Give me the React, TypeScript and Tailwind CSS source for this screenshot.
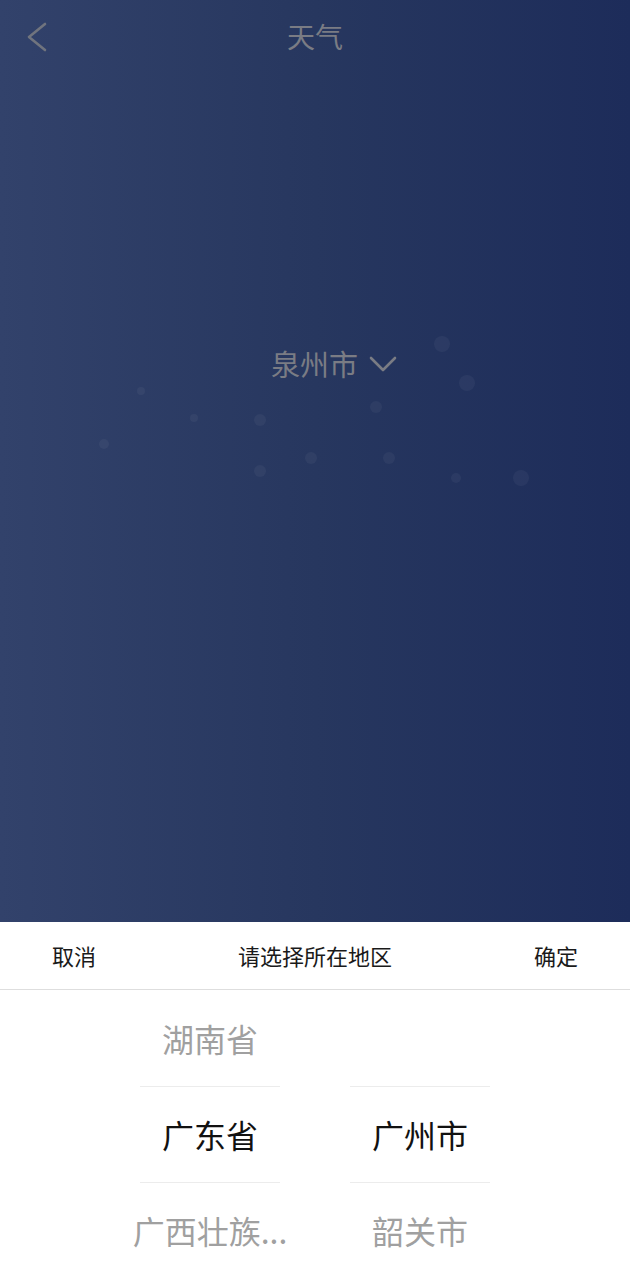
const DOTS = [
  { x: 442, y: 344, r: 8 },
  { x: 467, y: 383, r: 8 },
  { x: 141, y: 391, r: 4 },
  { x: 194, y: 418, r: 4 },
  { x: 260, y: 420, r: 6 },
  { x: 376, y: 407, r: 6 },
  { x: 104, y: 444, r: 5 },
  { x: 311, y: 458, r: 6 },
  { x: 389, y: 458, r: 6 },
  { x: 260, y: 471, r: 6 },
  { x: 456, y: 478, r: 5 },
  { x: 521, y: 478, r: 8 },
]

const provinces = ['湖南省', '广东省', '广西壮族...']
const cities = ['', '广州市', '韶关市']

function PickerColumn({ items }: { items: string[] }) {
  return (
    <div className="relative flex w-[140px] flex-col">
      {items.map((item, i) => (
        <div
          key={i}
          className={`flex h-[96px] items-center justify-center whitespace-nowrap text-[32px] ${
            i === 1 ? 'text-[#111111]' : 'text-[#a0a0a0]'
          }`}
        >
          {item}
        </div>
      ))}
      {/* selection lines */}
      <div className="absolute left-0 right-0 top-[96px] h-px bg-[#ececec]" />
      <div className="absolute left-0 right-0 top-[192px] h-px bg-[#ececec]" />
    </div>
  )
}

export default function App() {
  return (
    <div
      className="flex h-[1280px] w-[630px] flex-col overflow-hidden"
      style={{ fontFamily: '"Noto Sans CJK SC", "Noto Sans", sans-serif' }}
    >
      <div className="relative flex h-[922px] shrink-0 flex-col bg-gradient-to-r from-[#32426b] via-[#27375f] to-[#1d2c5a]">
        {/* top bar */}
        <div className="relative flex h-[76px] items-center justify-center pb-[4px]">
          <svg
            className="absolute left-[26px] top-[22px]"
            width="22"
            height="30"
            viewBox="0 0 22 30"
            fill="none"
            stroke="#70747e"
            strokeWidth="2.6"
            strokeLinecap="round"
            strokeLinejoin="round"
          >
            <polyline points="19,2 3,15 19,28" />
          </svg>
          <span className="text-[28px] text-[#7a7c84]">天气</span>
        </div>

        {/* dots */}
        {DOTS.map((d, i) => (
          <span
            key={i}
            className="absolute rounded-full bg-white/[0.045]"
            style={{ left: d.x - d.r, top: d.y - d.r, width: d.r * 2, height: d.r * 2 }}
          />
        ))}

        <div className="mt-[266px] flex items-center justify-center gap-[11px] pl-[38px]">
          <span className="text-[29px] text-[#7a7c84]">泉州市</span>
          <svg
            width="28"
            height="20"
            viewBox="0 0 28 20"
            fill="none"
            stroke="#7a7c84"
            strokeWidth="2.6"
            strokeLinecap="round"
            strokeLinejoin="round"
          >
            <polyline points="2,4 14,16 26,4" />
          </svg>
        </div>
      </div>

      {/* bottom picker sheet */}
      <div className="flex-1 bg-white">
        <div className="flex h-[68px] items-center justify-between border-b border-[#dedede] px-[52px] text-[22px] text-[#1a1a1a]">
          <span>取消</span>
          <span>请选择所在地区</span>
          <span>确定</span>
        </div>
        <div className="flex justify-center gap-[70px]">
          <PickerColumn items={provinces} />
          <PickerColumn items={cities} />
        </div>
      </div>
    </div>
  )
}
